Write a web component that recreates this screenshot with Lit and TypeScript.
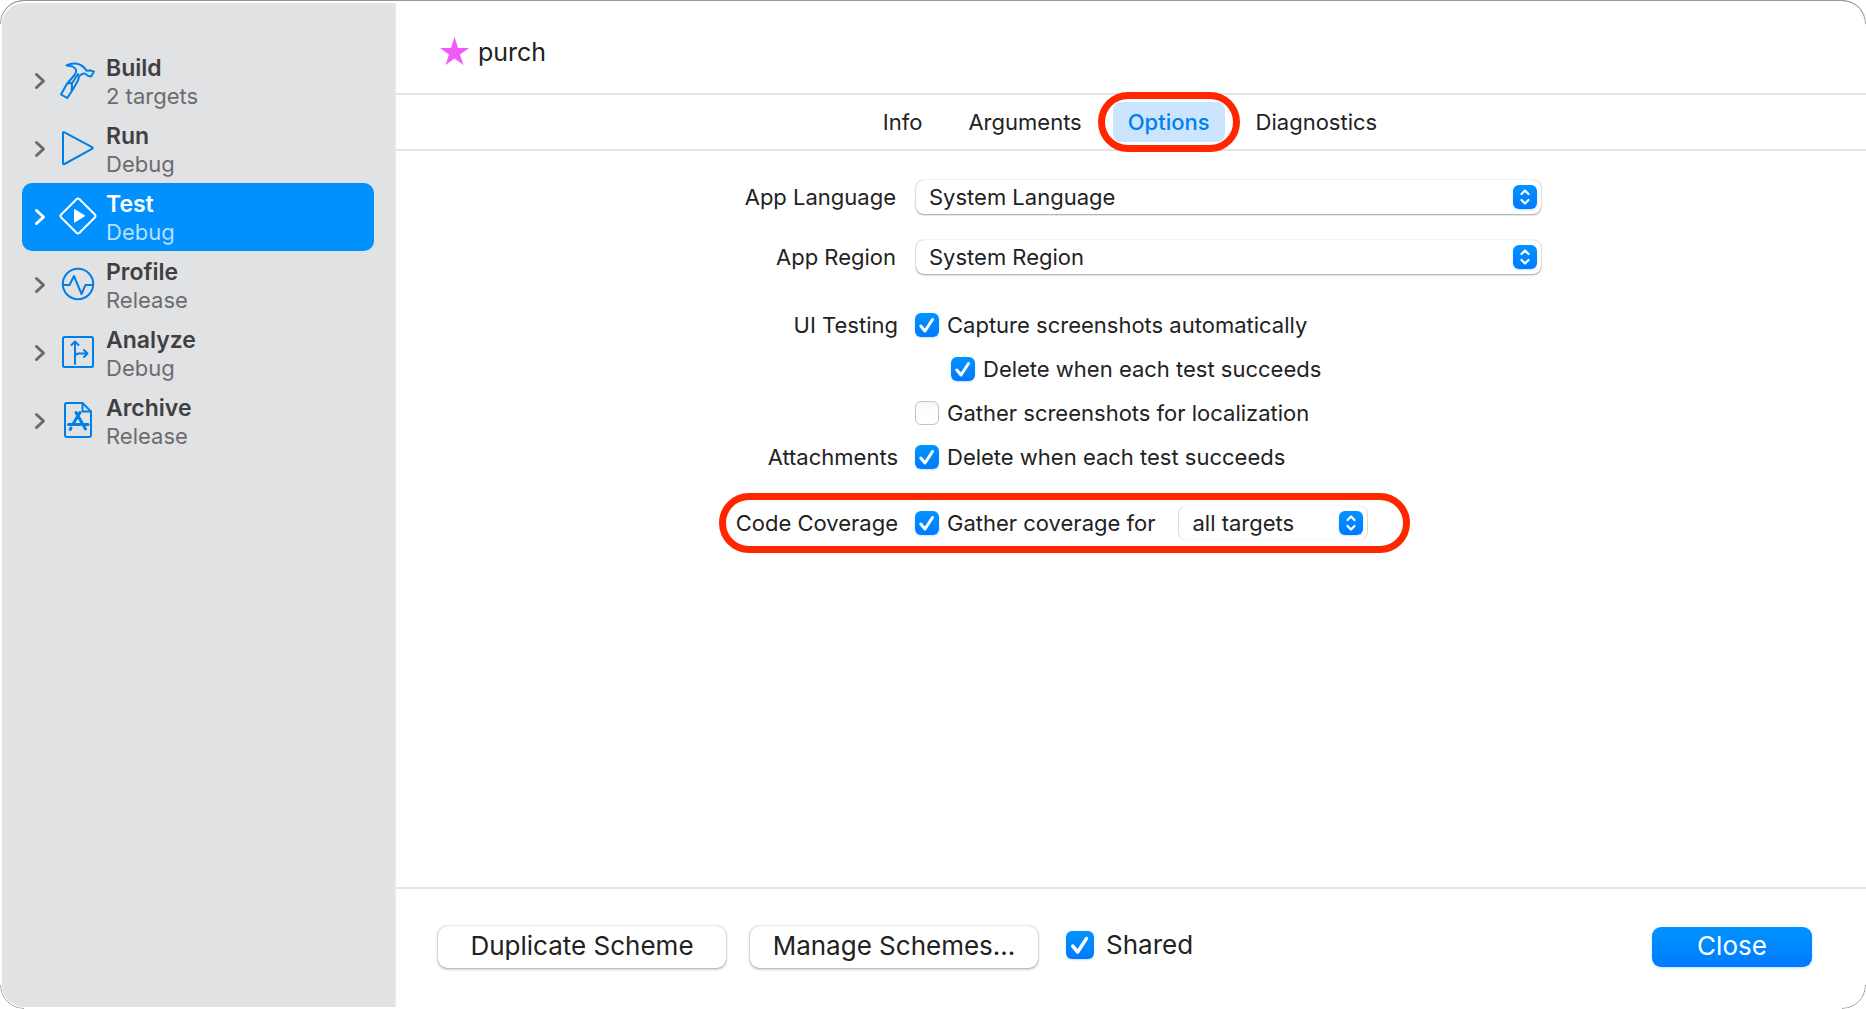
import { LitElement, html, css, svg, nothing } from "lit";
import { customElement, property, state } from "lit/decorators.js";

const icons: Record<string, unknown> = {
  build: svg`<path d="M7.500 4.500C13 1.500 20 1.500 25 6.500L27.500 9.500C28.500 10.200 29.500 9.800 30.500 9.300L35 10.600L32 15.600L28.300 14.600C27.500 12.800 25.800 12.400 24 12.700L20.500 14.600C19.500 16 19.800 17.500 18.900 19.500L14.500 27.500L8.300 37L2 33.500L7.800 23L15.500 14C17.800 10.500 17.800 8 14.500 6C12.500 4.800 10 4.900 7.500 4.500Z M8.500 22.500L12.500 22C13.500 24 13 26 12.500 29 M19 13L13.500 21.500"/>`,
  run: svg`<path d="M4 4.200Q4 2.500 5.500 3.300L33 18.200Q34.500 19 33 19.800L5.500 35Q4 35.800 4 34.200Z"/>`,
  test: svg`<path d="M17.500 2.200Q19 .8 20.500 2.200L35.800 17.500Q37.200 19 35.800 20.500L20.500 35.800Q19 37.200 17.500 35.800L2.200 20.500Q.8 19 2.200 17.500Z"/><path d="M15.500 12.800V25.200L25.500 19Z" fill="currentColor" stroke-width="1"/>`,
  profile: svg`<circle cx="19" cy="19" r="15.200"/><path d="M4 20H10.500L15 11L22.500 29L26.500 20H34"/>`,
  analyze: svg`<rect x="4" y="4" width="30" height="30" rx="1.500"/><path d="M16 31V9M12.500 12L16 8.500L19.500 12M16 23Q17 20.500 20 20.500H28M25 17L28.500 20.500L25 24"/>`,
  archive: svg`<path d="M7.500 2H23.500L32 10.500V34Q32 36 30 36H8Q6 36 6 34V3.500Q6 2 7.500 2Z"/><path d="M23.500 2V10.500H32"/><path d="M17 11.500L26.500 28M21 11.500L14 23M9.500 23.500H21M26 23.500H29M12 27L11.200 28.500" stroke-width="3"/>`,
};

@customElement("popup-select")
class PopupSelect extends LitElement {
  @property() value = "";
  @property() label = "";
  @property({ type: Boolean }) faint = false;

  static styles = css`
    :host { display: block; min-width: 0; }
    .box { display: grid; grid-template-columns: 1fr 28px; align-items: center; }
    select {
      grid-area: 1 / 1 / 2 / 3;
      appearance: none;
      width: 100%;
      height: 34px;
      margin: 0;
      padding: 0 40px 0 13px;
      border: 0;
      border-radius: 8px;
      background: #fff;
      box-shadow: 0 0 1px #00000059, 0 1px 2px #00000059;
      color: #222;
      font: 22px/30px Inter, "Liberation Sans", sans-serif;
    }
    .faint { box-shadow: 1px 0 1px #00000026, -1px 0 1px #00000026; }
    .arrows {
      grid-area: 1 / 2;
      width: 24px;
      height: 24px;
      border-radius: 6px;
      background: linear-gradient(#0094ff, #007aff);
      box-shadow: 0 1px 2px #007aff40;
      pointer-events: none;
    }
  `;

  render() {
    return html`<div class="box">
      <select class=${this.faint ? "faint" : ""} aria-label=${this.label}><option>${this.value}</option></select>
      <svg class="arrows" viewBox="0 0 24 24" fill="none" stroke="#fff" stroke-width="2.200" stroke-linecap="round" stroke-linejoin="round">
        <path d="M8.500 9L12 5.500L15.500 9M8.500 15L12 18.500L15.500 15" />
      </svg>
    </div>`;
  }
}

@customElement("check-field")
class CheckField extends LitElement {
  @property({ type: Boolean }) checked = false;
  @property({ type: Boolean }) large = false;
  @property() text = "";

  static styles = css`
    :host { display: block; }
    label { display: flex; align-items: center; gap: 8px; font: 22px/28px Inter, "Liberation Sans", sans-serif; white-space: nowrap; }
    .mark { display: grid; }
    input {
      grid-area: 1 / 1;
      appearance: none;
      width: 24px;
      height: 24px;
      margin: 0;
      border: 1px solid #c4c4c4;
      border-radius: 6px;
      background: linear-gradient(#f4f4f4, #fff 40%);
    }
    input:checked { border: 0; background: linear-gradient(#0094ff, #007aff); box-shadow: 0 1px 2px #007aff40; }
    svg { grid-area: 1 / 1; width: 24px; height: 24px; pointer-events: none; }
    .large { gap: 12px; font-size: 26px; }
    .large input, .large svg { width: 28px; height: 28px; }
  `;

  render() {
    return html`<label class=${this.large ? "large" : ""}>
      <span class="mark">
        <input type="checkbox" .checked=${this.checked} @change=${(e: Event) => (this.checked = (e.target as HTMLInputElement).checked)} />
        ${this.checked
          ? html`<svg viewBox="0 0 24 24" fill="none" stroke="#fff" stroke-width="3" stroke-linecap="round" stroke-linejoin="round"><path d="M5.800 13L10 18L17.500 6.500" /></svg>`
          : nothing}
      </span>
      <span>${this.text}</span>
    </label>`;
  }
}

@customElement("app-root")
class AppRoot extends LitElement {
  @state() private selected = "Test";
  @state() private tab = "Options";

  private actions = [
    ["build", "Build", "2 targets"],
    ["run", "Run", "Debug"],
    ["test", "Test", "Debug"],
    ["profile", "Profile", "Release"],
    ["analyze", "Analyze", "Debug"],
    ["archive", "Archive", "Release"],
  ];

  static styles = css`
    :host { display: block; font: 22px/28px Inter, "Liberation Sans", sans-serif; color: #222; background: #fff; }
    * { box-sizing: border-box; }
    button { font: inherit; color: inherit; border: 0; background: none; margin: 0; }
    .window {
      position: relative;
      display: grid;
      grid-template-columns: 396px minmax(0, 1fr);
      min-height: 100vh;
      border-radius: 24px;
      overflow: hidden;
      background: #fff;
      box-shadow: inset 0 1px #979797;
    }
    /* Outline that shows only around the four rounded corners. */
    .window::after {
      content: "";
      position: absolute;
      inset: 0;
      border: 1px solid #979797;
      border-radius: 24px;
      pointer-events: none;
      mask:
        linear-gradient(#000, #000) 0 0 / 24px 24px no-repeat,
        linear-gradient(#000, #000) 100% 0 / 24px 24px no-repeat,
        linear-gradient(#000, #000) 0 100% / 24px 24px no-repeat,
        linear-gradient(#000, #000) 100% 100% / 24px 24px no-repeat;
    }
    .sidebar { margin: 3px 0 2px 2px; padding: 44px 20px; background: #e1e2e4; border-radius: 22px 0 0 22px; border-right: 2px solid #e6e6e8; }
    .action { display: flex; align-items: center; width: 100%; height: 68px; padding: 0 12px; border-radius: 10px; text-align: left; }
    .chevron { width: 12px; height: 18px; margin-right: 13px; color: #6a6a6c; }
    .icon { width: 38px; height: 38px; margin: 0 9px 2px 0; color: #007fe8; }
    .title, .detail { display: block; }
    .title { padding-top: 1px; font-size: 23px; font-weight: 600; color: #404042; }
    .detail { color: #6c6c6f; }
    .selected { background: #0091ff; }
    .selected .chevron, .selected .icon, .selected .title { color: #fff; }
    .selected .detail { color: #b5deff; }
    .main { display: flex; flex-direction: column; min-width: 0; }
    .header { display: flex; align-items: center; gap: 8px; height: 95px; padding: 11px 42px 0; border-bottom: 2px solid #e4e4e4; }
    .star { width: 32px; height: 32px; }
    h1 { margin: 0; font-size: 25px; line-height: 32px; font-weight: 400; }
    .tabs { display: flex; justify-content: center; align-items: center; gap: 16px; height: 56px; padding-right: 2px; border-bottom: 2px solid #e4e4e4; }
    .tab { position: relative; height: 40px; padding: 0 15px; border-radius: 8px; }
    .current { background: #cce5ff; color: #0080f0; font-weight: 500; }
    .ring { position: absolute; border: 7px solid #ff2600; border-radius: 30px; pointer-events: none; }
    .tab-ring { inset: -10px -15px; }
    .form { flex: 1; display: grid; grid-template-columns: 500px minmax(0, 625px); column-gap: 20px; align-content: start; align-items: center; padding: 29px 42px 20px 0; }
    .label { text-align: right; white-space: nowrap; }
    .pick { height: 34px; margin-bottom: 26px; line-height: 34px; }
    .pick-last { margin-bottom: 29px; }
    .check { height: 44px; line-height: 44px; display: flex; align-items: center; justify-content: flex-start; }
    .form .check:not(.label) { margin-left: -1px; }
    .label.check { justify-content: flex-end; margin-right: -2px; }
    .nested { padding-left: 36px; }
    .coverage { grid-column: 1 / -1; position: relative; display: grid; grid-template-columns: subgrid; margin-top: 22px; }
    .coverage-ring { inset: -8px 131px -8px 323px; }
    .targets { width: 188px; margin-left: 24px; }
    .footer { display: flex; align-items: center; height: 122px; padding: 0 54px 4px 42px; border-top: 2px solid #e4e4e4; font-size: 26px; }
    .push { width: 288px; height: 42px; padding: 0 6px 2px; margin-right: 24px; border-radius: 9px; box-shadow: 0 0 1px #00000059, 0 1px 3px #00000059; background: #fff; }
    .shared { margin: 0 0 4px 4px; }
    .close { width: 160px; height: 40px; padding: 0 6px 2px; margin-left: auto; border-radius: 9px; color: #fff; background: linear-gradient(#0094ff, #007aff); box-shadow: 0 1px 3px #007aff40; }
  `;

  render() {
    return html`<div class="window">
      <nav class="sidebar">
        ${this.actions.map(
          ([icon, title, detail]) => html`<button class="action ${this.selected === title ? "selected" : ""}" @click=${() => (this.selected = title)}>
            <svg class="chevron" viewBox="0 0 12 18" fill="none" stroke="currentColor" stroke-width="3" stroke-linecap="round" stroke-linejoin="round"><path d="M2.500 2.500L9.500 9L2.500 15.500" /></svg>
            <svg class="icon" viewBox="0 0 38 38" fill="none" stroke="currentColor" stroke-width="2" stroke-linecap="round" stroke-linejoin="round">${icons[icon]}</svg>
            <span><span class="title">${title}</span><span class="detail">${detail}</span></span>
          </button>`
        )}
      </nav>
      <main class="main">
        <header class="header">
          <svg class="star" viewBox="0 0 32 32" fill="#f05af8"><path d="M16.500 1L20 12H31L22 18.500L25.500 29L16.500 22.500L7.500 29L11 18.500L2 12H13Z" /></svg>
          <h1>purch</h1>
        </header>
        <div class="tabs">
          ${["Info", "Arguments", "Options", "Diagnostics"].map(
            (name) => html`<button class="tab ${this.tab === name ? "current" : ""}" @click=${() => (this.tab = name)}>
              ${name}${name === "Options" ? html`<span class="ring tab-ring"></span>` : nothing}
            </button>`
          )}
        </div>
        <div class="form">
          <div class="label pick">App Language</div>
          <popup-select class="pick" label="App Language" value="System Language"></popup-select>
          <div class="label pick pick-last">App Region</div>
          <popup-select class="pick pick-last" label="App Region" value="System Region"></popup-select>
          <div class="label check">UI Testing</div>
          <div class="check"><check-field checked text="Capture screenshots automatically"></check-field></div>
          <div></div>
          <div class="check nested"><check-field checked text="Delete when each test succeeds"></check-field></div>
          <div></div>
          <div class="check"><check-field text="Gather screenshots for localization"></check-field></div>
          <div class="label check">Attachments</div>
          <div class="check"><check-field checked text="Delete when each test succeeds"></check-field></div>
          <div class="coverage">
            <div class="label check">Code Coverage</div>
            <div class="check">
              <check-field checked text="Gather coverage for"></check-field>
              <popup-select class="targets" faint label="Coverage targets" value="all targets"></popup-select>
            </div>
            <span class="ring coverage-ring"></span>
          </div>
        </div>
        <footer class="footer">
          <button class="push">Duplicate Scheme</button>
          <button class="push">Manage Schemes...</button>
          <check-field class="shared" large checked text="Shared"></check-field>
          <button class="close">Close</button>
        </footer>
      </main>
    </div>`;
  }
}
